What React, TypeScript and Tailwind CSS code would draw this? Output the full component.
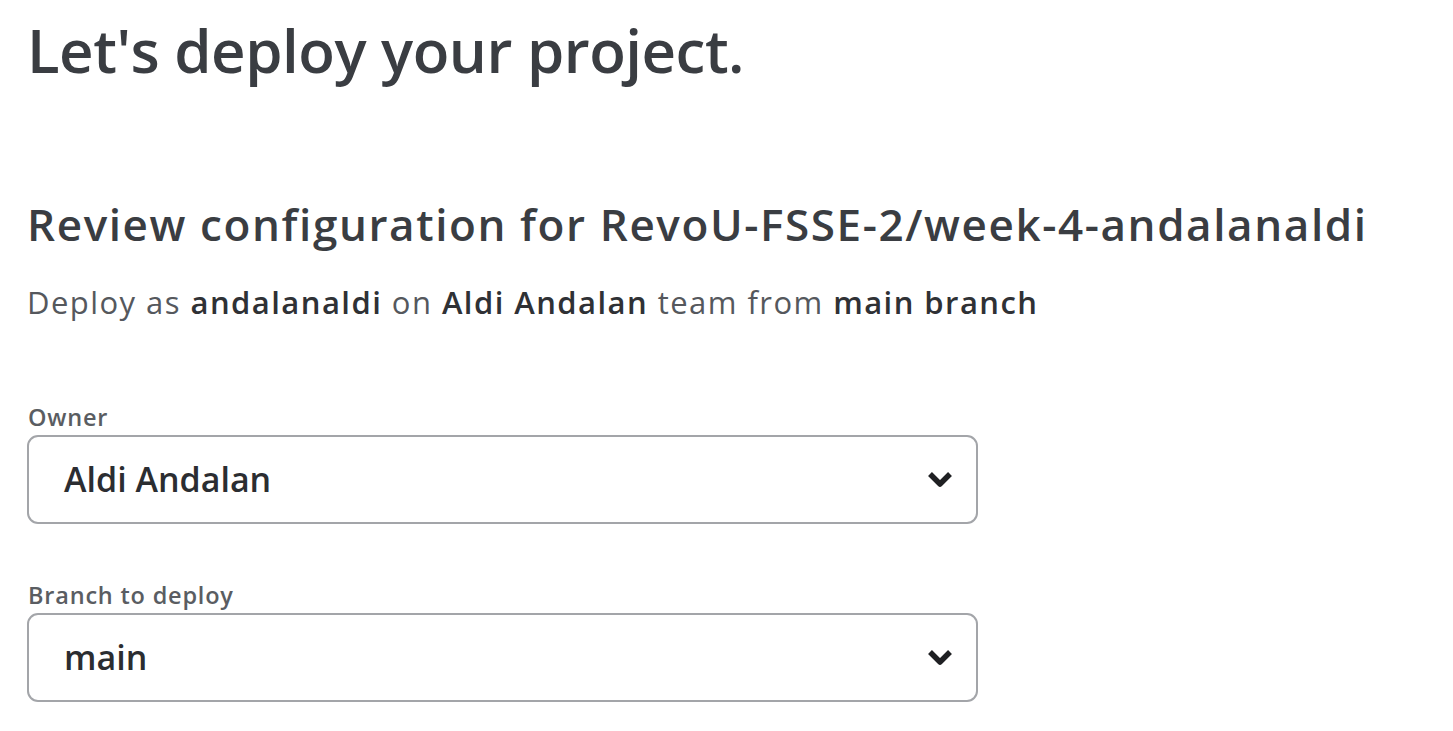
function Chevron() {
  return (
    <svg width="26" height="18" viewBox="0 0 26 18" className="text-[#1f2023]">
      <polyline
        points="3,3 13,13 23,3"
        fill="none"
        stroke="currentColor"
        strokeWidth="5.5"
        strokeLinejoin="round"
      />
    </svg>
  );
}

function SelectField({ label, value }: { label: string; value: string }) {
  return (
    <div className="flex flex-col">
      <label className="text-[23.5px] leading-[30px] font-semibold tracking-[0.8px] text-[#5a5d62] ml-[1px]">
        {label}
      </label>
      <div className="mt-[3px] h-[89px] w-[951px] rounded-[11px] border-2 border-[#a3a5a9] bg-white flex items-center justify-between pl-[35px] pr-[23px]">
        <span className="text-[34px] font-semibold text-[#2b2d31]">{value}</span>
        <Chevron />
      </div>
    </div>
  );
}

export default function App() {
  return (
    <div
      className="min-h-screen bg-white pl-[27px] pt-[10px] text-[#3a3d42]"
      style={{ fontFamily: '"Open Sans", "Noto Sans", sans-serif' }}
    >
      <h1 className="text-[60px] leading-[80px] font-semibold tracking-[-0.5px]">
        Let's deploy your project.
      </h1>
      <h2 className="mt-[106px] text-[44px] leading-[56px] font-semibold tracking-[1.6px]">
        Review configuration for RevoU-FSSE-2/week-4-andalanaldi
      </h2>
      <p className="mt-[30px] text-[31px] leading-[40px] tracking-[1.45px] text-[#55585d]">
        Deploy as <b className="font-semibold text-[#2f3135]">andalanaldi</b> on{" "}
        <b className="font-semibold text-[#2f3135]">Aldi Andalan</b> team from{" "}
        <b className="font-semibold text-[#2f3135]">main branch</b>
      </p>
      <div className="mt-[80px] flex flex-col gap-[56px]">
        <SelectField label="Owner" value="Aldi Andalan" />
        <SelectField label="Branch to deploy" value="main" />
      </div>
    </div>
  );
}
